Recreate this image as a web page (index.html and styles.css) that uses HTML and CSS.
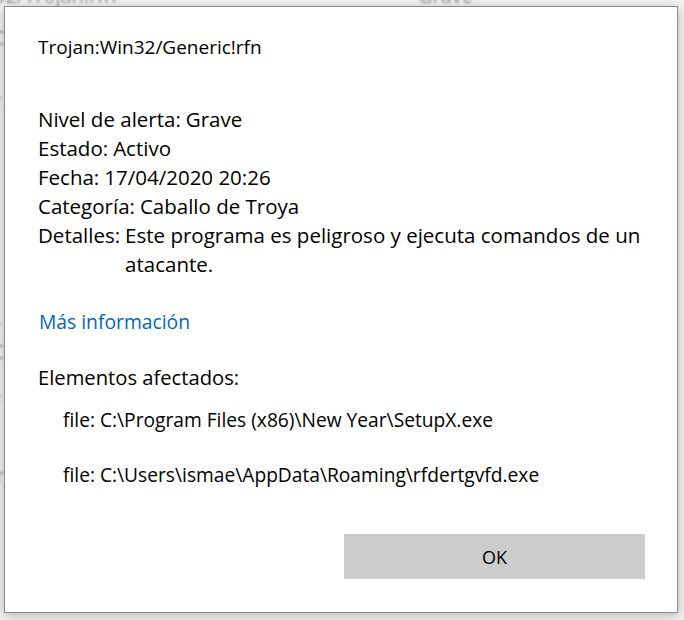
FILE: index.html
```html
<!DOCTYPE html>
<html lang="es">
<head>
<meta charset="utf-8">
<title>Trojan:Win32/Generic!rfn</title>
<link rel="stylesheet" href="styles.css">
</head>
<body>
<div class="backdrop" aria-hidden="true">
  <span class="ghost ghost-top">32/Trojan!rfn</span>
  <span class="ghost ghost-grave">Grave</span>
  <span class="ghost ghost-l1">C</span>
  <span class="ghost ghost-l2">e</span>
  <span class="ghost ghost-l3">S</span>
  <span class="ghost ghost-l4">C</span>
  <span class="ghost ghost-l5">e</span>
  <span class="ghost ghost-l6">r</span>
</div>
<div class="dialog">
  <div class="title">Trojan:Win32/Generic!rfn</div>
  <div class="props">
    <div class="row"><span class="label">Nivel de alerta:</span><span class="value">Grave</span></div>
    <div class="row"><span class="label">Estado:</span><span class="value">Activo</span></div>
    <div class="row"><span class="label">Fecha:</span><span class="value">17/04/2020 20:26</span></div>
    <div class="row"><span class="label">Categoría:</span><span class="value">Caballo de Troya</span></div>
    <div class="row"><span class="label">Detalles:</span><span class="value wrap">Este programa es peligroso y ejecuta comandos de un atacante.</span></div>
  </div>
  <a class="more" href="#">Más información</a>
  <div class="affected">Elementos afectados:</div>
  <ul class="files">
    <li>file: C:\Program Files (x86)\New Year\SetupX.exe</li>
    <li>file: C:\Users\ismae\AppData\Roaming\rfdertgvfd.exe</li>
  </ul>
  <div class="actions"><button class="ok" type="button">OK</button></div>
</div>
</body>
</html>
```
FILE: styles.css
```css
html, body {
  margin: 0;
  height: 100%;
}
body {
  background: #f3f3f3;
  font-family: "Open Sans", "Noto Sans", sans-serif;
  color: #000;
  padding: 6px 0 0 4px;
  box-sizing: border-box;
  position: relative;
  overflow: hidden;
}
.backdrop {
  position: absolute;
  inset: 0;
  z-index: 0;
}
.ghost {
  position: absolute;
  color: #9a9a9a;
  font-size: 20px;
  filter: blur(1px);
}
.ghost-top { left: -6px; top: -18px; }
.ghost-grave { left: 418px; top: -18px; }
.ghost-l1 { left: -8px; top: 24px; }
.ghost-l2 { left: -10px; top: 84px; }
.ghost-l3 { left: -10px; top: 306px; }
.ghost-l4 { left: -8px; top: 338px; }
.ghost-l5 { left: -10px; top: 382px; }
.ghost-l6 { left: -4px; top: 462px; }
.dialog {
  position: relative;
  z-index: 1;
  width: 674px;
  height: 607px;
  box-sizing: border-box;
  background: #fff;
  border: 1px solid #8c8c8c;
  box-shadow: 0 2px 10px rgba(0, 0, 0, 0.28);
  padding: 28px 0 0 33px;
  display: flex;
  flex-direction: column;
}
.title {
  font-size: 19px;
  line-height: 24px;
}
.props {
  margin-top: 46px;
  font-size: 20.5px;
  line-height: 29px;
  display: flex;
  flex-direction: column;
}
.row {
  display: flex;
  gap: 5px;
}
.label { white-space: nowrap; }
.value { white-space: nowrap; }
.value.wrap { white-space: normal; width: 540px; }
.more {
  margin-top: 30px;
  font-size: 19.3px;
  line-height: 26px;
  color: #0067c0;
  text-decoration: none;
  align-self: flex-start;
  padding-left: 1px;
}
.affected {
  margin-top: 29px;
  font-size: 20.2px;
  line-height: 26px;
}
.files {
  list-style: none;
  margin: 0;
  padding: 0 0 0 25px;
  font-size: 19.2px;
  line-height: 24px;
}
.files li { margin-top: 18px; }
.files li + li { margin-top: 31px; }
.actions {
  margin-top: auto;
  padding: 0 32px 33px 0;
  display: flex;
  justify-content: flex-end;
}
.ok {
  width: 301px;
  height: 45px;
  border: 0;
  background: #cccccc;
  font-family: inherit;
  font-size: 18px;
  color: #000;
}
```
